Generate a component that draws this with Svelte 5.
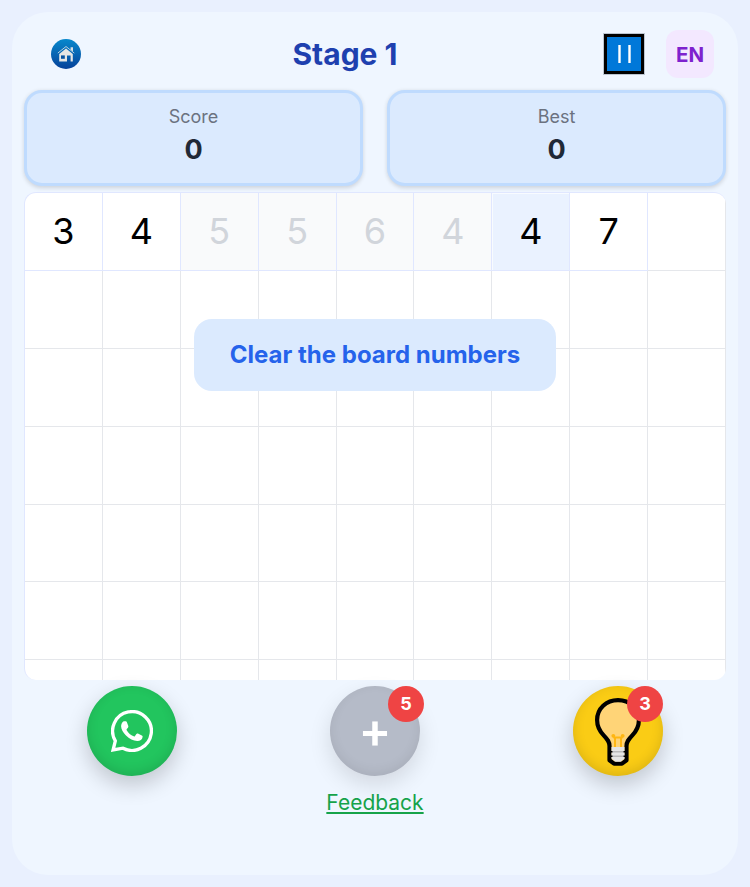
<script>
  const numbers = [
    { n: 3 }, { n: 4 }, { n: 5, used: true }, { n: 5, used: true }, { n: 6, used: true },
    { n: 4, used: true }, { n: 4, hint: true }, { n: 7 }, { n: '' }
  ];
  const empty = Array.from({ length: 54 }, (_, i) => i);
</script>

<div class="page">
  <main class="card">
    <header>
      <button class="home" aria-label="Home">
        <svg width="30" height="30" viewBox="0 0 30 30">
          <defs>
            <linearGradient id="sky" x1="0" y1="0" x2="0" y2="1">
              <stop offset="0" stop-color="#0788cc" />
              <stop offset="1" stop-color="#06429a" />
            </linearGradient>
          </defs>
          <circle cx="15" cy="15" r="15" fill="url(#sky)" />
          <path d="M8.2 15 15 9.600l6.800 5.400v7.600H19.600v-6H16v6H8.200z" fill="#e6e6e4" />
          <path d="M6.800 14.100 15 7.500l8.300 6.600" fill="none" stroke="#b5cfe0" stroke-width="1" />
          <path d="M19.600 8.300h2.400v4.300l-2.400-1.900z" fill="#d5dfe4" />
          <path d="M10 16.400h3.800v3.400H10z" fill="#07529f" />
        </svg>
      </button>
      <h1>Stage 1</h1>
      <div class="tools">
        <button class="pause" aria-label="Pause"><i></i><i></i></button>
        <button class="lang">EN</button>
      </div>
    </header>

    <section class="stats">
      <div class="stat"><span>Score</span><strong>0</strong></div>
      <div class="stat"><span>Best</span><strong>0</strong></div>
    </section>

    <section class="board">
      <div class="grid">
        {#each numbers as c}
          <div class="cell top" class:used={c.used} class:hint={c.hint} class:blank={c.n === ''}>{c.n}</div>
        {/each}
        {#each empty as i (i)}
          <div class="cell"></div>
        {/each}
      </div>
      <div class="toast">Clear the board numbers</div>
    </section>

    <section class="actions">
      <button class="round green" aria-label="WhatsApp">
        <svg width="42" height="42" viewBox="0 0 42 42">
          <path d="M2.1 39.900 4.310 30.890A19.400 19.400 0 1 1 12 38.190z" fill="none" stroke="#fff" stroke-width="3.300" />
          <path d="M12.700 11.200h1.700c.8 0 1.200.3 1.500 1l1.400 3.800c.2.7 0 1.200-.4 1.700l-1.100 1.300c-.3.4-.4.8-.1 1.300 1.700 3 4 4.900 6.900 6 .6.2 1 .1 1.400-.4l1.400-1.900c.4-.6.8-.7 1.500-.4l3.900 1.900c.7.3.9.7.8 1.400-.3 2.600-2.500 4-5.100 4.100-3.900.1-8.200-2.200-11.500-5.500-2.800-2.800-4.900-6.100-4.900-9.200 0-2.400 1.100-4.300 2.600-5.100z" fill="#fff" />
        </svg>
      </button>
      <button class="round gray"><span class="plus">+</span><b>5</b></button>
      <button class="round yellow" aria-label="Hint">
        <svg width="46" height="70" viewBox="0 0 46 70">
          <path d="M23 4.100C11.300 4.100 2.100 12.500 2.100 24c0 6.500 2.600 11.200 6.600 15.400 3.800 4 5.800 6.300 5.800 10.600v14.300l4.500 3.300h8l4.500-3.300V50c0-4.300 2-6.600 5.800-10.600 4-4.200 6.600-8.900 6.600-15.400C43.900 12.500 34.700 4.100 23 4.100z" fill="#ffd477" stroke="#000" stroke-width="4.200" stroke-linejoin="round" />
          <path d="M20 51V41.500M26 51V41.500M18.300 41.500h9.400" fill="none" stroke="#ffb612" stroke-width="2" />
          <circle cx="18.300" cy="39.800" r="1.900" fill="#ffb612" />
          <circle cx="27.700" cy="39.800" r="1.900" fill="#ffb612" />
          <path d="M16.500 51h13v11.500l-4 3.200h-5l-4-3.200z" fill="#e5e5e5" />
          <path d="M17.500 55.700h11M17.500 60.300h11" stroke="#b9b9b9" stroke-width="1.400" />
          <path d="M15.500 55.700h2M28.500 55.700h2M15.500 60.300h2M28.500 60.300h2" stroke="#000" stroke-width="1.600" />
        </svg>
        <b>3</b>
      </button>
    </section>
    <a href="#feedback">Feedback</a>
  </main>
</div>

<style>
  :global(body) { margin: 0; }
  .page {
    box-sizing: border-box;
    height: 887px;
    padding: 12px;
    background: #e9f0fe;
    font-family: Inter, sans-serif;
  }
  .card {
    box-sizing: border-box;
    height: 863px;
    padding: 18px 12px 0;
    border-radius: 36px;
    background: #eff6ff;
    display: flex;
    flex-direction: column;
  }
  button {
    border: 0;
    padding: 0;
    font-family: inherit;
    display: flex;
    align-items: center;
    justify-content: center;
  }
  header {
    height: 48px;
    padding: 0 12px 0 27px;
    display: grid;
    grid-template-columns: 110px 1fr 110px;
    align-items: center;
  }
  .home { width: 30px; height: 30px; background: none; }
  h1 {
    margin: 0;
    padding-right: 75px;
    text-align: center;
    font-size: 30px;
    line-height: 48px;
    font-weight: 700;
    color: #1e40af;
  }
  .tools { display: flex; align-items: center; gap: 22px; }
  .pause {
    box-sizing: border-box;
    width: 40px;
    height: 40px;
    border: 3px solid #000;
    background: #0078d9;
    gap: 7px;
    outline: 1px solid #6d7c8b66;
    flex: none;
  }
  .pause i {
    width: 3px;
    height: 18px;
    background: linear-gradient(90deg, #b4d6f3 0 1px, #fff 1px 2px, #b4d6f3 2px 3px);
  }
  .lang {
    width: 48px;
    height: 48px;
    border-radius: 12px;
    background: #f3e8ff;
    color: #7e22ce;
    font-size: 20.5px;
    font-weight: 700;
  }
  .stats { display: flex; gap: 24px; margin-top: 12px; }
  .stat {
    box-sizing: border-box;
    flex: 1;
    height: 96px;
    border: 3px solid #bfdbfe;
    border-radius: 18px;
    background: #dbeafe;
    box-shadow: 0 1.5px 4px rgba(0, 0, 0, .14);
    padding-top: 10px;
    text-align: center;
  }
  .stat span { display: block; font-size: 18px; line-height: 27px; color: #6b7280; }
  .stat strong { display: block; font-size: 27px; line-height: 40px; color: #1f2937; }
  .board {
    position: relative;
    box-sizing: border-box;
    flex: none;
    width: 702px;
    height: 488px;
    margin-top: 6px;
    border-left: 1px solid #e0e7ff;
    border-top: 1px solid #e0e7ff;
    border-radius: 12px;
    overflow: hidden;
    background: #fff;
  }
  .grid {
    display: grid;
    grid-template-columns: repeat(9, 1fr);
    grid-auto-rows: 77.89px;
  }
  .cell {
    box-sizing: border-box;
    border-right: 1px solid #e5e7eb;
    border-bottom: 1px solid #e5e7eb;
    display: flex;
    align-items: center;
    justify-content: center;
    font-size: 36px;
    color: #000;
  }
  .top { border-color: #e0e7ff; }
  .blank { border-color: #e5e7eb; }
  .used { background: #f9fafb; color: #d1d5db; }
  .hint { background: #eaf2ff; box-shadow: inset 1px 1px #f8fbff; }
  .toast {
    position: absolute;
    left: 169px;
    top: 126px;
    width: 362px;
    height: 72px;
    border-radius: 18px;
    background: #dbeafe;
    color: #2563eb;
    font-size: 24px;
    font-weight: 700;
    line-height: 72px;
    text-align: center;
    white-space: nowrap;
  }
  .actions { display: flex; justify-content: center; gap: 153px; margin-top: 6px; }
  .round {
    position: relative;
    width: 90px;
    height: 90px;
    border-radius: 50%;
    box-shadow: 0 9px 22px rgba(0, 0, 0, .2), inset 0 -3px 12px rgba(0, 0, 0, .12);
  }
  .green { background: #22c55e; }
  .gray {
    background: #b5bbc8;
    box-shadow: 0 9px 22px rgba(0, 0, 0, .12), inset 0 -3px 12px rgba(0, 0, 0, .07);
  }
  .yellow { background: #facc15; }
  .plus { color: #fff; font-size: 49px; line-height: 90px; font-weight: 600; }
  .round b {
    position: absolute;
    right: -4px;
    top: 0;
    width: 36px;
    height: 36px;
    border-radius: 50%;
    background: #ef4444;
    color: #fff;
    font-size: 18px;
    line-height: 36px;
    text-align: center;
  }
  .yellow b { right: 0; }
  a {
    align-self: center;
    margin-top: 11px;
    color: #16a34a;
    font-size: 21px;
    line-height: 32px;
    text-decoration: underline;
  }
</style>
